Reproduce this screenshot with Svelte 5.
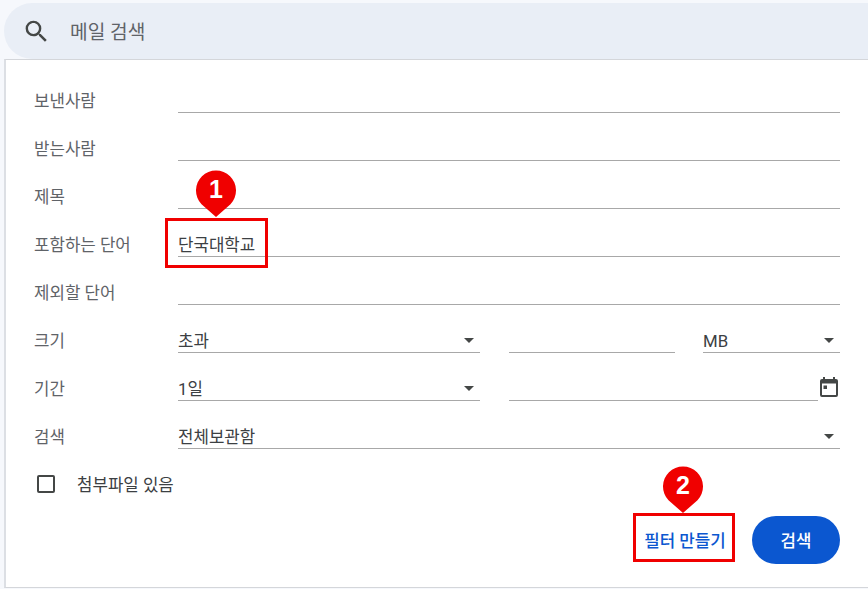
<script lang="ts">
  const textRows = [
    { label: '보낸사람', value: '' },
    { label: '받는사람', value: '' },
    { label: '제목', value: '' },
    { label: '포함하는 단어', value: '단국대학교' },
    { label: '제외할 단어', value: '' },
  ];
</script>

{#snippet arrow()}
  <svg class="arrow" width="10" height="5" viewBox="0 0 10 5"><path d="M0 0h10L5 5z" fill="#444746" /></svg>
{/snippet}

{#snippet pin(n: number, cls: string)}
  <div class="pin {cls}">
    <svg width="42" height="48" viewBox="0 0 42 48">
      <path d="M21 48 L6.5 35.2 A20 20 0 1 1 35.5 35.2 Z" fill="#f00000" />
    </svg>
    <span>{n}</span>
  </div>
{/snippet}

<div class="page">
  <div class="searchbar">
    <svg width="29" height="29" viewBox="0 0 24 24">
      <path fill="#444746" d="M15.5 14h-.79l-.28-.27A6.47 6.47 0 0 0 16 9.5 6.5 6.5 0 1 0 9.5 16c1.61 0 3.09-.59 4.23-1.57l.27.28v.79l5 4.99L20.49 19l-4.99-5zm-6 0C7.01 14 5 11.99 5 9.5S7.01 5 9.5 5 14 7.01 14 9.5 11.99 14 9.5 14z" />
    </svg>
    <span>메일 검색</span>
  </div>

  <div class="panel">
    {#each textRows as row}
      <div class="row">
        <span class="label">{row.label}</span>
        <div class="field">{row.value}</div>
      </div>
    {/each}

    <div class="row">
      <span class="label">크기</span>
      <div class="split">
        <div class="field select wide">초과 {@render arrow()}</div>
        <div class="field mid"></div>
        <div class="field select unit">MB {@render arrow()}</div>
      </div>
    </div>

    <div class="row">
      <span class="label">기간</span>
      <div class="split">
        <div class="field select wide">1일 {@render arrow()}</div>
        <div class="field date"></div>
        <svg class="cal" width="24" height="24" viewBox="0 0 24 24">
          <path fill="#444746" d="M19 4h-1V2h-2v2H8V2H6v2H5a2 2 0 0 0-2 2v14a2 2 0 0 0 2 2h14a2 2 0 0 0 2-2V6a2 2 0 0 0-2-2zm0 16H5V8.5h14V20zM6.5 10.5h3.5v3.5H6.5z" />
        </svg>
      </div>
    </div>

    <div class="row">
      <span class="label">검색</span>
      <div class="field select">전체보관함 {@render arrow()}</div>
    </div>

    <label class="attach">
      <span class="box"></span>
      <span>첨부파일 있음</span>
    </label>

    <div class="actions">
      <button class="btn-filter">필터 만들기</button>
      <button class="btn-search">검색</button>
    </div>
  </div>

  <!-- annotations -->
  <div class="mark mark-1"></div>
  <div class="mark mark-2"></div>
  {@render pin(1, 'pin-1')}
  {@render pin(2, 'pin-2')}
</div>

<style>
  :global(body) {
    margin: 0;
    background: #f6f8fc;
  }
  .page {
    position: relative;
    width: 868px;
    height: 589px;
    overflow: hidden;
    font-family: Roboto, "Noto Sans CJK KR", sans-serif;
    box-sizing: border-box;
    padding: 3px 0 0 4px;
  }
  .searchbar {
    display: flex;
    align-items: center;
    gap: 19px;
    height: 56px;
    box-sizing: border-box;
    padding-left: 18px;
    background: #e9eef6;
    border-radius: 28px 0 0 28px;
    font-size: 19.2px;
    color: #5f6368;
  }
  .panel {
    box-sizing: border-box;
    height: 529px;
    background: #fff;
    border: 1px solid #d4d6da;
    border-left: 2px solid #dcdfe4;
    border-right: none;
    padding: 5px 28px 0 28px;
  }
  .row {
    display: flex;
    align-items: flex-end;
    height: 48px;
  }
  .label {
    width: 144px;
    flex-shrink: 0;
    font-size: 16.8px;
    line-height: 20px;
    color: #5f6368;
    padding-bottom: 2px;
  }
  .field {
    position: relative;
    flex: 1;
    box-sizing: border-box;
    height: 24px;
    line-height: 24px;
    font-size: 16.8px;
    color: #3c4043;
    border-bottom: 1px solid #a8a8a8;
  }
  .split {
    flex: 1;
    display: flex;
    align-items: flex-end;
  }
  .wide { flex: none; width: 302px; }
  .mid { flex: none; width: 166px; margin-left: 29px; }
  .unit { flex: none; width: 137px; margin-left: 28px; }
  .date { flex: none; width: 309px; margin-left: 29px; }
  .cal { margin-left: -1px; position: relative; top: -2px; }
  .arrow {
    position: absolute;
    right: 6px;
    top: 9px;
  }
  .attach {
    display: flex;
    align-items: center;
    height: 48px;
    margin-top: 11px;
    font-size: 16.8px;
    color: #3c4043;
  }
  .box {
    box-sizing: border-box;
    width: 18px;
    height: 18px;
    margin: 0 22px 0 3px;
    border: 2px solid #444746;
    border-radius: 2px;
  }
  .actions {
    display: flex;
    justify-content: flex-end;
    align-items: center;
    gap: 17px;
    margin-top: 8px;
  }
  button {
    font-family: inherit;
    font-size: 16.8px;
    font-weight: 500;
    border: none;
    padding: 0;
    cursor: pointer;
  }
  .btn-filter {
    width: 100px;
    height: 48px;
    background: transparent;
    color: #0b57d0;
  }
  .btn-search {
    width: 88px;
    height: 48px;
    border-radius: 24px;
    background: #0b57d0;
    color: #fff;
  }
  .mark {
    position: absolute;
    box-sizing: border-box;
    border: 3px solid #f00000;
  }
  .mark-1 { left: 165px; top: 218px; width: 103px; height: 50px; }
  .mark-2 { left: 633px; top: 513px; width: 102px; height: 49px; }
  .pin {
    position: absolute;
    width: 42px;
    height: 48px;
  }
  .pin svg { display: block; }
  .pin span {
    position: absolute;
    left: 0;
    right: 0;
    top: 5px;
    text-align: center;
    color: #fff;
    font: 700 25px/30px "Liberation Sans", sans-serif;
  }
  .pin-1 { left: 195px; top: 169px; }
  .pin-2 { left: 662px; top: 465px; }
</style>
